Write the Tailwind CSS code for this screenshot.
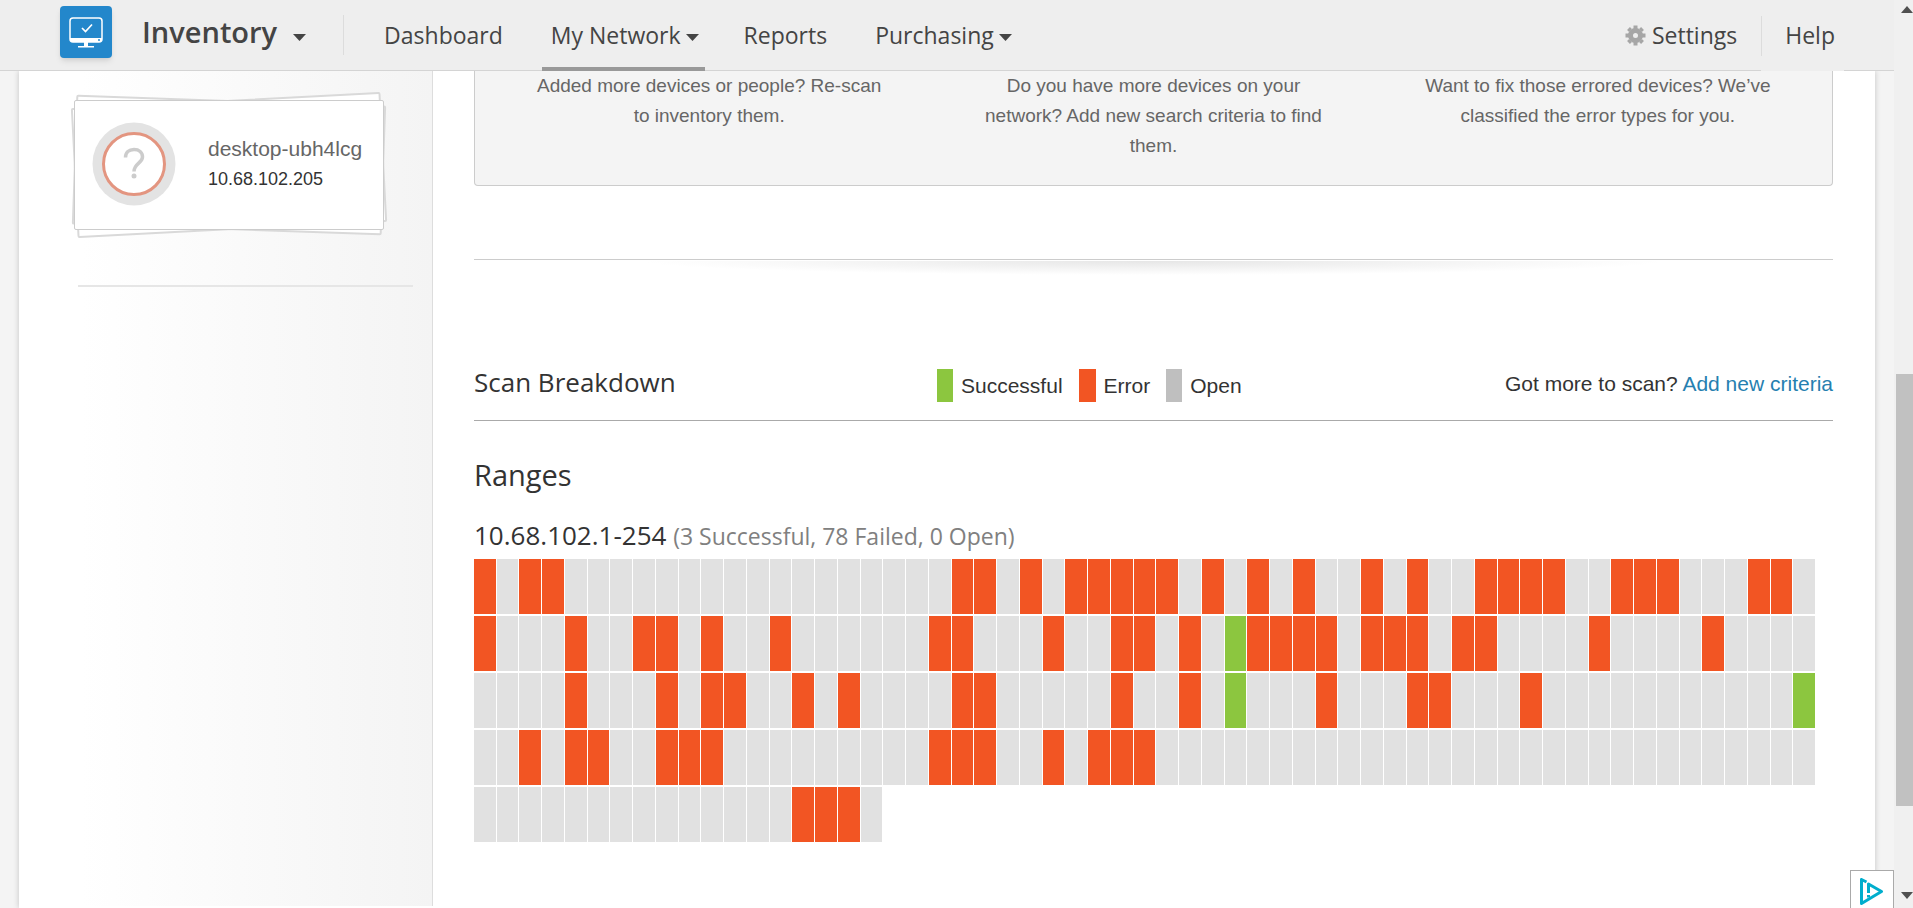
<!DOCTYPE html>
<html lang="en">
<head>
<meta charset="utf-8">
<meta name="viewport" content="width=device-width, initial-scale=1">
<title>Inventory - Scan Breakdown</title>
<script src="https://cdn.jsdelivr.net/npm/@tailwindcss/browser@4"></script>
</head>
<body class="flex h-screen overflow-hidden bg-[#f4f4f4] font-['Liberation_Sans',Arial,sans-serif] text-[21px] text-[#333]">
<div class="relative flex min-w-0 flex-1 flex-col">
  <header class="relative z-10 flex h-[71px] shrink-0 items-start border-b border-[#d4d4d4] bg-[#eee] pl-[60px] pr-[50px] font-['Open_Sans',sans-serif] text-[23px] text-[#444]">
    <a href="#" aria-label="Home" class="mt-1.5 flex h-[52px] w-[52px] items-center justify-center rounded-sm bg-[#2387cb] shadow-md">
      <svg width="34" height="32" viewBox="0 0 34 32" fill="none">
        <rect x="1" y="2" width="32" height="24" rx="3" stroke="#fff" stroke-width="1.5"/>
        <path d="M1 22h32v1a3 3 0 0 1-3 3H4a3 3 0 0 1-3-3z" fill="#fff"/>
        <circle cx="30" cy="24" r="1" fill="#2387cb"/>
        <path d="M15 26h4v4h6v1.500H9V30h6z" fill="#fff"/>
        <path d="M13 12l3.500 3.500L23 8.500" stroke="#fff" stroke-width="1.700"/>
      </svg>
    </a>
    <button type="button" class="ml-[30px] flex h-16 items-center text-[29px] font-semibold">Inventory
      <svg class="ml-4 mt-2.5" width="13" height="7" viewBox="0 0 13 7" fill="#444"><path d="M0 0h13L6.500 7z"/></svg>
    </button>
    <div class="ml-[37px] mt-[15px] h-10 w-px bg-[#dcdcdc]"></div>
    <nav class="flex h-[71px]" aria-label="Main">
      <a href="#" class="ml-[31px] flex h-[71px] items-center px-[9px]">Dashboard</a>
      <a href="#" class="ml-[30px] flex h-[71px] items-center border-b-4 border-[#999] pl-[9px] pr-1.5 pt-1">My Network
        <svg class="ml-[5px] mt-1" width="13" height="7" viewBox="0 0 13 7" fill="#444"><path d="M0 0h13L6.500 7z"/></svg></a>
      <a href="#" class="ml-[30px] flex h-[71px] items-center px-[9px]">Reports</a>
      <a href="#" class="ml-[30px] flex h-[71px] items-center pl-[9px] pr-1.5">Purchasing
        <svg class="ml-[5px] mt-1" width="13" height="7" viewBox="0 0 13 7" fill="#444"><path d="M0 0h13L6.500 7z"/></svg></a>
    </nav>
    <div class="ml-auto flex h-[71px] items-center">
      <a href="#" class="flex items-center">
        <svg class="mr-1.5" width="21" height="21" viewBox="-10.500 -10.500 21 21" fill="none" stroke="#a6a6a6">
          <circle r="5" stroke-width="5"/>
          <path stroke-width="4" d="M0-6v-4M0 6v4M-6 0h-4M6 0h4M5-5l2-2M-5 5l-2 2M-5-5l-2-2M5 5l2 2"/>
        </svg>Settings</a>
      <a href="#" class="ml-6 flex h-[71px] items-center bg-[#eee] pr-[9px]"><span class="mr-[23px] h-10 w-px bg-[#dcdcdc]"></span>Help</a>
    </div>
  </header>

  <div class="mx-[19px] flex min-h-0 flex-1 bg-white shadow-[0_0_6px_rgba(0,0,0,0.2)]">
    <aside class="mb-0.5 w-[414px] shrink-0 border-r border-[#ddd] bg-linear-to-r from-white from-15% to-[#f4f4f4] px-[55px] pt-[29px]">
      <article class="relative h-[130px] w-[310px]">
        <div class="absolute inset-0 -rotate-3 rounded-xs border-2 border-[#d9d9d9] bg-white"></div>
        <div class="absolute inset-0 rotate-2 rounded-xs border-2 border-[#d9d9d9] bg-white"></div>
        <div class="relative flex h-full items-center rounded-xs border border-[#ccc] bg-white pb-0.5 pl-[17px]">
          <svg width="84" height="84" viewBox="0 0 84 84" fill="none">
            <circle cx="42" cy="42" r="41.500" fill="#e3e3e3"/>
            <circle cx="42" cy="42" r="30.500" fill="#fff" stroke="#e39580" stroke-width="3"/>
            <path d="M33.500 35.500c0-5 3.500-8 8.500-8s8.500 3 8.500 7.500c0 6-8.500 6.500-8.500 14.500" stroke="#ccc" stroke-width="3.500"/>
            <circle cx="42" cy="54" r="2.500" fill="#ccc"/>
          </svg>
          <div class="ml-8">
            <h2 class="leading-[30px] text-[#666]">desktop-ubh4lcg</h2>
            <p class="text-lg leading-[30px]">10.68.102.205</p>
          </div>
        </div>
      </article>
      <hr class="ml-1 mt-[55px] w-[335px] border-t-2 border-[#e6e6e6]">
    </aside>

    <main class="min-w-0 flex-1 pl-[41px] pr-[42px]">
      <section class="grid h-[115px] grid-cols-3 rounded-b-sm border border-t-0 border-[#ccc] bg-[#f4f4f4] px-3 text-center text-[19px] leading-[30px] text-[#666]">
        <p class="mx-auto w-[360px]">Added more devices or people? Re-scan to inventory them.</p>
        <p class="mx-auto w-[360px]">Do you have more devices on your network? Add new search criteria to find them.</p>
        <p class="mx-auto w-[360px]">Want to fix those errored devices? We’ve classified the error types for you.</p>
      </section>
      <div class="mt-[73px] border-t border-[#ccc]">
        <div class="mx-auto mt-px h-[14px] w-3/4 bg-[radial-gradient(ellipse_50%_100%_at_50%_0%,#e6e6e6,#fff)]"></div>
      </div>

      <div class="mt-[94px] flex items-start border-b border-[#aaa] pb-[18px]">
        <h2 class="w-[463px] font-['Open_Sans',sans-serif] text-[26px] leading-[26px]">Scan Breakdown</h2>
        <ul class="flex gap-4">
          <li class="flex items-center gap-2"><span class="h-[33px] w-4 bg-[#8cc63f]"></span>Successful</li>
          <li class="flex items-center gap-2"><span class="h-[33px] w-[17px] bg-[#f25523]"></span>Error</li>
          <li class="flex items-center gap-2"><span class="h-[33px] w-4 bg-[#bfbfbf]"></span>Open</li>
        </ul>
        <p class="ml-auto leading-[30px]">Got more to scan? <a href="#" class="text-[#267fb0]">Add new criteria</a></p>
      </div>

      <h2 class="mt-[33px] font-['Open_Sans',sans-serif] text-[29px] leading-[42px]">Ranges</h2>
      <h3 class="mt-[21px] font-['Open_Sans',sans-serif] text-[26px] leading-[36px]">10.68.102.1-254 <span class="text-[23px] text-[#808080]">(3 Successful, 78 Failed, 0 Open)</span></h3>
      <div id="map" role="img" aria-label="Scan result for each address in the range" class="mr-[18px] mt-[5px] grid grid-cols-[repeat(59,minmax(0,1fr))] gap-x-px gap-y-0.5"></div>
    </main>
  </div>
  <a href="#" aria-label="Ad options" class="absolute bottom-0 right-0 flex h-[38px] w-11 items-start justify-center border border-b-0 border-[#aaa] bg-white pt-[7px]">
    <svg width="26" height="28" viewBox="0 0 26 28" fill="none" stroke="#00aecd" stroke-linejoin="round">
      <path stroke-width="3" d="M7.500 4L2.500 1.500v24l20-12L9.500 6v9"/>
      <path stroke-width="3" d="M9.500 17v2.500"/>
    </svg>
  </a>
</div>

<div class="flex w-[19px] shrink-0 flex-col bg-[#f0f0f0] pl-0.5" aria-hidden="true">
  <svg class="ml-[5px] mt-1.5" width="12" height="7" viewBox="0 0 12 7" fill="#505050"><path d="M0 7h12L6 0z"/></svg>
  <div class="mt-[361px] h-[432px] bg-[#c1c1c1]"></div>
  <svg class="mb-[9px] ml-[5px] mt-auto" width="12" height="7" viewBox="0 0 12 7" fill="#505050"><path d="M0 0h12L6 7z"/></svg>
</div>

<script>
  // One character per address: E = error, S = successful, . = not found
  const rows = [
    'E.EE.................EE.E.EEEEE.E.E.E..E.E..EEEE..EEE...EE.',
    'E...E..EE.E..E......EE...E..EE.E.SEEEE.EEE.EE....E....E....',
    '....E...E.EE..E.E....EE.....E..E.S...E...EE...E...........S',
    '..E.EE..EEE.........EEE..E.EEE.............................',
    '..............EEE.'
  ];
  const styles = { E: 'h-[55px] bg-[#f25523]', S: 'h-[55px] bg-[#8cc63f]', '.': 'h-[55px] bg-[#e1e1e1]' };
  const map = document.getElementById('map');
  for (const c of rows.join('')) {
    const cell = document.createElement('div');
    cell.className = styles[c];
    map.append(cell);
  }
</script>
</body>
</html>
